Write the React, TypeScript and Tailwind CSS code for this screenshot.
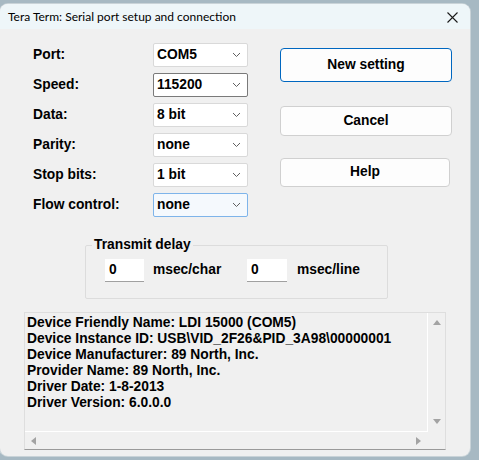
import React from "react";

const F = { fontFamily: '"Liberation Sans", Arial, sans-serif' };

function Chevron() {
  return (
    <svg width="9" height="6" viewBox="0 0 9 6" className="shrink-0">
      <path d="M1 1 L4.5 4.5 L8 1" fill="none" stroke="#606060" strokeWidth="1" />
    </svg>
  );
}

function Combo({ value, variant }: { value: string; variant?: "focus" | "hover" }) {
  const cls =
    variant === "focus"
      ? "border-[#7a7a7a] bg-white"
      : variant === "hover"
      ? "border-[#7eb4ea] bg-[#f5f9fd]"
      : "border-[#d9d9d9] bg-white";
  return (
    <div className={`flex h-[24px] w-[95px] items-center justify-between rounded-[2px] border pl-[3px] pr-[6px] ${cls}`}>
      <span className="text-[13.8px] font-bold text-black">{value}</span>
      <Chevron />
    </div>
  );
}

function Row({ label, value, variant }: { label: string; value: string; variant?: "focus" | "hover" }) {
  return (
    <div className="flex h-[24px] items-center">
      <span className="w-[120px] text-[13.8px] font-bold text-black">{label}</span>
      <Combo value={value} variant={variant} />
    </div>
  );
}

function Tri({ dir }: { dir: "up" | "down" | "left" | "right" }) {
  const d =
    dir === "up"
      ? "M0 6 L4 1 L8 6 Z"
      : dir === "down"
      ? "M0 1 L4 6 L8 1 Z"
      : dir === "left"
      ? "M6 0 L1 4 L6 8 Z"
      : "M1 0 L6 4 L1 8 Z";
  return (
    <svg width="8" height="8" viewBox="0 0 8 8">
      <path d={d} fill="#a3a3a3" />
    </svg>
  );
}

export default function App() {
  const lines = [
    "Device Friendly Name: LDI 15000 (COM5)",
    "Device Instance ID: USB\\VID_2F26&PID_3A98\\00000001",
    "Device Manufacturer: 89 North, Inc.",
    "Provider Name: 89 North, Inc.",
    "Driver Date: 1-8-2013",
    "Driver Version: 6.0.0.0",
  ];
  return (
    <div className="h-[460px] w-[479px] bg-[#a7b9c3] pt-[4px]" style={F}>
      <div className="flex h-[452px] w-[470px] flex-col overflow-hidden rounded-[8px] bg-[#f0f0f0] shadow-[0_0_0_1px_#c9d3d8]">
        {/* title bar */}
        <div className="flex h-[25px] items-center justify-between bg-[#eef6f9] pl-[8px] pr-[12px] pt-[1px]">
          <span className="text-[12px] text-black" style={{ fontFamily: 'Lato, "Noto Sans", sans-serif' }}>
            Tera Term: Serial port setup and connection
          </span>
          <svg width="11" height="11" viewBox="0 0 11 11">
            <path d="M0.5 0.5 L10.5 10.5 M10.5 0.5 L0.5 10.5" stroke="#1a1a1a" strokeWidth="1.1" />
          </svg>
        </div>

        {/* top section */}
        <div className="flex pl-[33px] pt-[14px]">
          <div className="flex flex-col gap-[6px]">
            <Row label="Port:" value="COM5" />
            <Row label="Speed:" value="115200" variant="focus" />
            <Row label="Data:" value="8 bit" />
            <Row label="Parity:" value="none" />
            <Row label="Stop bits:" value="1 bit" />
            <Row label="Flow control:" value="none" variant="hover" />
          </div>
          <div className="ml-[32px] mt-[5px] flex flex-col">
            <button className="flex h-[34px] w-[172px] items-center justify-center rounded-[4px] border border-[#0067c0] bg-[#fdfdfd] text-[13.8px] font-bold text-black">
              New setting
            </button>
            <button className="mt-[24px] flex h-[30px] w-[172px] items-center justify-center rounded-[4px] border border-[#d0d0d0] bg-[#fdfdfd] text-[13.8px] font-bold text-black">
              Cancel
            </button>
            <button className="mt-[22px] flex h-[29px] w-[170px] items-center justify-center rounded-[4px] border border-[#d0d0d0] bg-[#fdfdfd] text-[13.8px] font-bold text-black">
              Help
            </button>
          </div>
        </div>

        {/* transmit delay */}
        <fieldset className="ml-[85px] mt-[20px] h-[62px] w-[303px] rounded-[2px] border border-[#dcdcdc] px-0">
          <legend className="ml-[6px] px-[2px] text-[13.8px] font-bold leading-[16px] text-black">Transmit delay</legend>
          <div className="mt-[6px] flex items-center pl-[19px]">
            <div className="flex h-[23px] w-[39px] items-center border-b border-[#a0a0a0] bg-white pl-[4px] text-[13.8px] font-bold">0</div>
            <span className="ml-[9px] w-[94px] text-[13.8px] font-bold">msec/char</span>
            <div className="flex h-[23px] w-[40px] items-center border-b border-[#a0a0a0] bg-white pl-[4px] text-[13.8px] font-bold">0</div>
            <span className="ml-[10px] text-[13.8px] font-bold">msec/line</span>
          </div>
        </fieldset>

        {/* info box */}
        <div className="ml-[24px] mt-[13px] flex h-[138px] w-[422px] flex-col border border-[#dedede] border-b-[#9a9a9a] bg-[#f0f0f0]">
          <div className="flex min-h-0 flex-1">
            <div className="flex-1 border-b border-r border-white pl-[2px] pt-[2px]">
              {lines.map((l) => (
                <div key={l} className="h-[16px] whitespace-pre text-[13.8px] font-bold leading-[16px] text-black">
                  {l}
                </div>
              ))}
            </div>
            <div className="flex w-[17px] flex-col items-center justify-between py-[6px]">
              <Tri dir="up" />
              <Tri dir="down" />
            </div>
          </div>
          <div className="flex h-[17px] items-center justify-between pl-[5px] pr-[22px]">
            <Tri dir="left" />
            <Tri dir="right" />
          </div>
        </div>
      </div>
    </div>
  );
}
